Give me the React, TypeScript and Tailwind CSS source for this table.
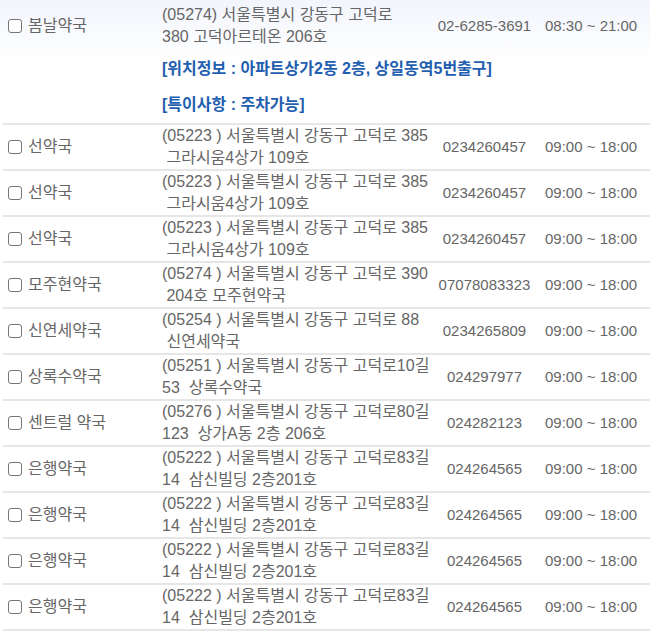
import React from 'react';

type Row = {
  name: string;
  addr1: string;
  addr2: string;
  phone: string;
  hours: string;
};

const rows: Row[] = [
  { name: '선약국', addr1: '(05223 ) 서울특별시 강동구 고덕로 385', addr2: ' 그라시움4상가 109호', phone: '0234260457', hours: '09:00 ~ 18:00' },
  { name: '선약국', addr1: '(05223 ) 서울특별시 강동구 고덕로 385', addr2: ' 그라시움4상가 109호', phone: '0234260457', hours: '09:00 ~ 18:00' },
  { name: '선약국', addr1: '(05223 ) 서울특별시 강동구 고덕로 385', addr2: ' 그라시움4상가 109호', phone: '0234260457', hours: '09:00 ~ 18:00' },
  { name: '모주현약국', addr1: '(05274 ) 서울특별시 강동구 고덕로 390', addr2: ' 204호 모주현약국', phone: '07078083323', hours: '09:00 ~ 18:00' },
  { name: '신연세약국', addr1: '(05254 ) 서울특별시 강동구 고덕로 88', addr2: ' 신연세약국', phone: '0234265809', hours: '09:00 ~ 18:00' },
  { name: '상록수약국', addr1: '(05251 ) 서울특별시 강동구 고덕로10길', addr2: '53  상록수약국', phone: '024297977', hours: '09:00 ~ 18:00' },
  { name: '센트럴 약국', addr1: '(05276 ) 서울특별시 강동구 고덕로80길', addr2: '123  상가A동 2층 206호', phone: '024282123', hours: '09:00 ~ 18:00' },
  { name: '은행약국', addr1: '(05222 ) 서울특별시 강동구 고덕로83길', addr2: '14  삼신빌딩 2층201호', phone: '024264565', hours: '09:00 ~ 18:00' },
  { name: '은행약국', addr1: '(05222 ) 서울특별시 강동구 고덕로83길', addr2: '14  삼신빌딩 2층201호', phone: '024264565', hours: '09:00 ~ 18:00' },
  { name: '은행약국', addr1: '(05222 ) 서울특별시 강동구 고덕로83길', addr2: '14  삼신빌딩 2층201호', phone: '024264565', hours: '09:00 ~ 18:00' },
  { name: '은행약국', addr1: '(05222 ) 서울특별시 강동구 고덕로83길', addr2: '14  삼신빌딩 2층201호', phone: '024264565', hours: '09:00 ~ 18:00' },
];

function Check() {
  return <span className="w-[14px] h-[14px] shrink-0 rounded-[3px] border border-[#767676] bg-white" />;
}

function NameCell({ name }: { name: string }) {
  return (
    <div className="w-[159px] shrink-0 flex items-center gap-[6px] pl-[5px]">
      <Check />
      <span className="whitespace-pre">{name}</span>
    </div>
  );
}

export default function App() {
  return (
    <div
      className="w-[650px] bg-white text-[16px] leading-[22px] text-[#666]"
      style={{ fontFamily: '"Liberation Sans", "Noto Sans CJK KR", sans-serif' }}
    >
      {/* first row, with location notes */}
      <div className="bg-linear-to-b from-[#f2f5fc] via-white via-50% to-white">
        <div className="ml-[3px] border-b-2 border-[#e6e6e6] pb-[7px]">
          <div className="flex pt-[4px]">
            <NameCell name="봄날약국" />
            <div className="w-[270px] shrink-0">
              <div>(05274) 서울특별시 강동구 고덕로</div>
              <div>380 고덕아르테온 206호</div>
            </div>
            <div className="w-[105px] shrink-0 flex items-center justify-center text-[15px]">02-6285-3691</div>
            <div className="flex items-center pl-[8px] text-[15px]">08:30 ~ 21:00</div>
          </div>
          <div className="pl-[159px] font-bold text-[#1f5eb0]">
            <div className="mt-[10px] whitespace-nowrap">[위치정보 : 아파트상가2동 2층, 상일동역5번출구]</div>
            <div className="mt-[14px]">[특이사항 : 주차가능]</div>
          </div>
        </div>
      </div>

      {rows.map((r, i) => (
        <div key={i} className="ml-[3px] flex border-b-2 border-[#e6e6e6]">
          <NameCell name={r.name} />
          <div className="w-[270px] shrink-0 whitespace-pre">
            <div>{r.addr1}</div>
            <div>{r.addr2}</div>
          </div>
          <div className="w-[105px] shrink-0 flex items-center justify-center text-[15px]">{r.phone}</div>
          <div className="flex items-center pl-[8px] text-[15px]">{r.hours}</div>
        </div>
      ))}
    </div>
  );
}
